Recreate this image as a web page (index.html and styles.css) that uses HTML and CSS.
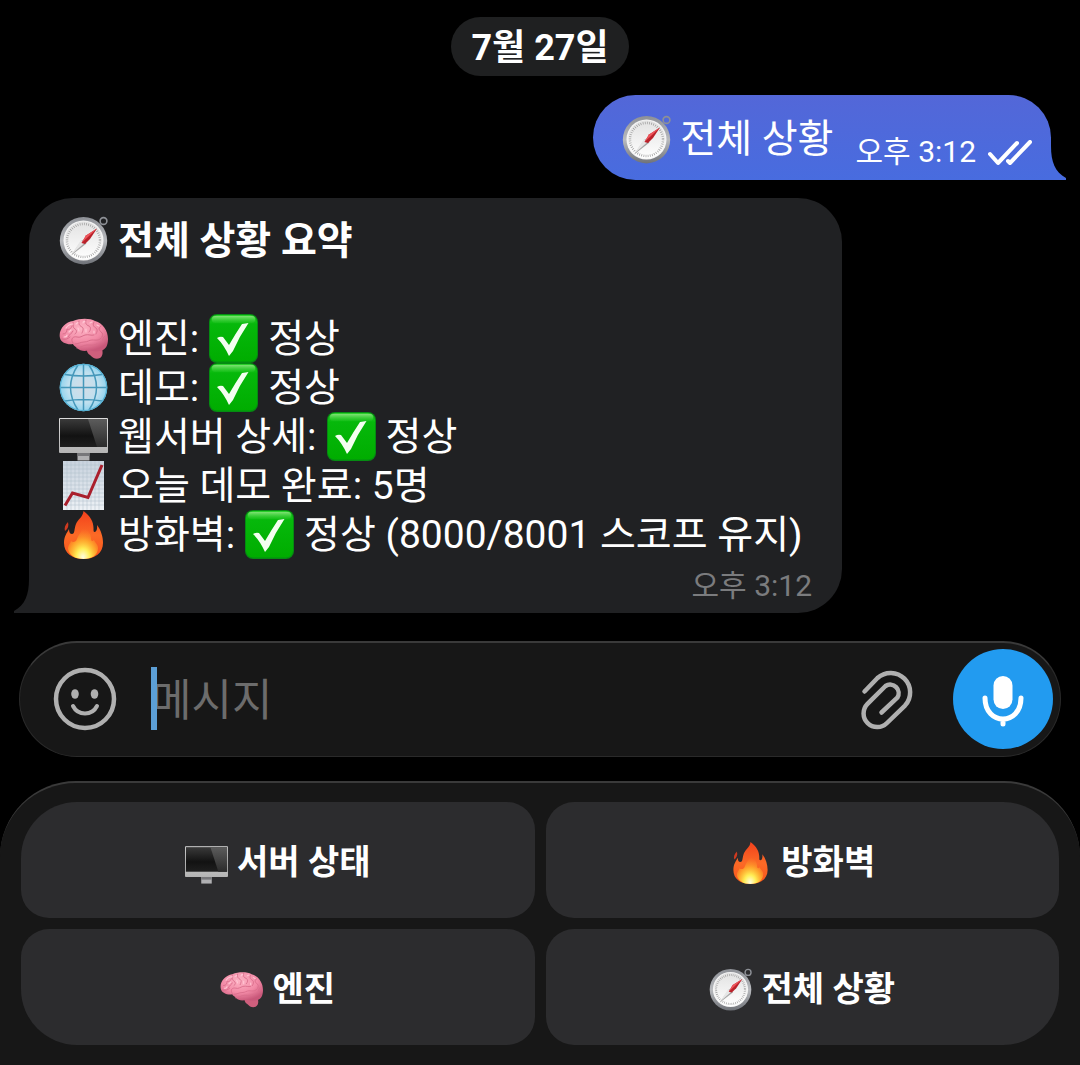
FILE: index.html
```html
<!DOCTYPE html>
<html lang="ko">
<head>
    <meta charset="UTF-8">
    <meta name="viewport" content="width=device-width, initial-scale=1.0">
    <title>전체 상황</title>
    <link rel="stylesheet" href="styles.css">
</head>
<body>
    <!-- Shared emoji drawings -->
    <svg class="sprite" aria-hidden="true">
        <defs>
            <linearGradient id="rim" x1="0" y1="0" x2="0" y2="1">
                <stop offset="0" stop-color="#8d9096"/>
                <stop offset=".5" stop-color="#b9bbbf"/>
                <stop offset="1" stop-color="#6f7278"/>
            </linearGradient>
            <linearGradient id="dial" x1="0" y1="0" x2="0" y2="1">
                <stop offset="0" stop-color="#e2e2e2"/>
                <stop offset="1" stop-color="#ffffff"/>
            </linearGradient>
            <radialGradient id="pink" cx=".45" cy=".3" r=".7">
                <stop offset="0" stop-color="#fdb3c4"/>
                <stop offset=".6" stop-color="#f28aa6"/>
                <stop offset="1" stop-color="#c9587a"/>
            </radialGradient>
            <radialGradient id="sea" cx=".5" cy=".5" r=".5">
                <stop offset="0" stop-color="#d5dde6"/>
                <stop offset=".65" stop-color="#bfe0ef"/>
                <stop offset="1" stop-color="#8fd3ee"/>
            </radialGradient>
            <linearGradient id="green" x1="0" y1="0" x2="0" y2="1">
                <stop offset="0" stop-color="#2bd02b"/>
                <stop offset=".2" stop-color="#06b80b"/>
                <stop offset="1" stop-color="#00ad00"/>
            </linearGradient>
            <linearGradient id="gloss" x1="0" y1="0" x2="0" y2="1">
                <stop offset="0" stop-color="#7fe274"/>
                <stop offset="1" stop-color="#2bc92b" stop-opacity=".3"/>
            </linearGradient>
            <linearGradient id="screen" x1="0" y1="0" x2="0" y2="1">
                <stop offset="0" stop-color="#3a3a3a"/>
                <stop offset=".6" stop-color="#121212"/>
                <stop offset="1" stop-color="#1f1f1f"/>
            </linearGradient>
            <linearGradient id="glare" x1="0" y1="0" x2="0" y2="1">
                <stop offset="0" stop-color="#5c5c5c"/>
                <stop offset="1" stop-color="#2b2b2b"/>
            </linearGradient>
            <linearGradient id="metal" x1="0" y1="0" x2="0" y2="1">
                <stop offset="0" stop-color="#dcdcdc"/>
                <stop offset="1" stop-color="#b4b4b4"/>
            </linearGradient>
            <linearGradient id="paper" x1="0" y1="0" x2="0" y2="1">
                <stop offset="0" stop-color="#c9d3de"/>
                <stop offset="1" stop-color="#edf1f5"/>
            </linearGradient>
            <linearGradient id="flame" x1="0" y1="0" x2="0" y2="1">
                <stop offset="0" stop-color="#f2401c"/>
                <stop offset=".5" stop-color="#fb6a26"/>
                <stop offset="1" stop-color="#f9551c"/>
            </linearGradient>
            <radialGradient id="core" cx=".5" cy=".95" r=".75">
                <stop offset="0" stop-color="#fffde0"/>
                <stop offset=".3" stop-color="#ffee55"/>
                <stop offset=".6" stop-color="#ffb52e" stop-opacity=".8"/>
                <stop offset="1" stop-color="#fd7f27" stop-opacity="0"/>
            </radialGradient>
        </defs>
        <symbol id="compass" viewBox="0 0 49 49">
            <circle cx="44.5" cy="5" r="3.4" fill="none" stroke="#8d9096" stroke-width="1.6"/>
            <circle cx="24.5" cy="24.7" r="23.7" fill="url(#rim)"/>
            <circle cx="24.5" cy="24.5" r="20" fill="#f6f6f6"/>
            <circle cx="24.5" cy="24.5" r="19" fill="url(#dial)"/>
            <circle cx="24.5" cy="24.5" r="16.5" fill="none" stroke="#9a9a9a" stroke-width="2.4" stroke-dasharray=".7 1.46"/>
            <path d="M12 39.5L23 24l4.5 3.5z" fill="#a4a4a4"/>
            <path d="M12.5 38.5L22 24l3.5 3z" fill="#e6e6e6"/>
            <path d="M38 12.5L27 19.5 22.5 27 26 28 31 23z" fill="#b9212a"/>
            <path d="M38 12.5L27 19.5 22.5 27z" fill="#ef555b"/>
        </symbol>
        <symbol id="brain" viewBox="0 0 49 49">
            <path d="M31 33c-5 2-3 6 0 8 3 3 6 5 10 3 3-2 3-6 2-9z" fill="#cf5f7d"/>
            <path d="M1 24C-1 16 6 8 14 7c7-3 17-3 22 0 8 2 13 10 13 18 0 6-2 11-8 12-5 1-8 0-11-1-4 2-9 1-12-2-2-2-4-3-4-4-5 1-12-1-13-6z" fill="url(#pink)"/>
            <path d="M14 29c-3-4 0-7 4-6 3 1 5-1 8-2 4-1 6 1 9 0M16 30c3 0 6-2 9-2 4 0 5-2 8-2 4 0 7 1 9-2M18 34c4 0 6-3 10-3 4 0 7 1 10-1M4 20c3 0 4-2 4-5 2 1 4 0 5-3M9 23c1-3 4-3 5-6M14 8c1 3-1 5 2 7 2 1 2 4 0 5M20 7c-1 3 1 5 3 6s1 4 0 6M27 6c-1 3 0 5 3 6 2 1 2 4 0 6M35 8c-2 3 0 5 2 6 2 2 1 4 0 6M42 12c-3 2-2 4 0 6 2 1 2 3 1 5M46 22c-2 1-3 4-2 6M3 25c3 1 6 0 8-2" fill="none" stroke="#d96e8b" stroke-width="1" stroke-linecap="round"/>
            <path d="M7 14c2-3 5-4 7-4M17 10c1-1 2-2 2-1M24 9c0-2 2-2 2-1M31 9l2-1M38 11l2 1M10 18l2-2M27 15v3M19 14l1 3M35 17v2M5 23c2 0 3-1 3-2" fill="none" stroke="#ffc6d4" stroke-width="1.2" stroke-linecap="round"/>
        </symbol>
        <symbol id="globe" viewBox="0 0 49 49">
            <circle cx="24.5" cy="24.5" r="23.8" fill="url(#sea)"/>
            <g fill="none" stroke="#4698ba" stroke-width="1.5">
                <path d="M24.5 1v47M1 24.5h47M6 11.5q18.5 3 37 0M6 38q18.5-3 37 0"/>
                <path d="M19 2Q4 24.5 19 47M30 2q15 22.5 0 45"/>
                <circle cx="24.5" cy="24.5" r="23.2" stroke="#55b0d3" stroke-width="1.2"/>
            </g>
        </symbol>
        <symbol id="monitor" viewBox="0 0 49 49">
            <path d="M18.5 40h12v8.5h-12z" fill="#b0b0b2"/>
            <path d="M18.5 41h12v3h-12z" fill="#77777a"/>
            <rect x="0" y="6" width="49" height="35" rx="1" fill="url(#metal)"/>
            <rect x="1" y="7" width="47" height="28" fill="url(#screen)"/>
            <path d="M29 7h19v28H38z" fill="url(#glare)"/>
        </symbol>
        <symbol id="chart" viewBox="0 0 49 49">
            <rect x="4" y="0" width="41" height="49" fill="url(#paper)"/>
            <path d="M8 0v49M12 0v49M16 0v49M20 0v49M24 0v49M28 0v49M32 0v49M36 0v49M40 0v49M4 4h41M4 8h41M4 12h41M4 16h41M4 20h41M4 24h41M4 28h41M4 32h41M4 36h41M4 40h41M4 44h41" stroke="#aebccb" stroke-width=".5"/>
            <path d="M6 44.5L13.5 32 29 36.5 43 4" fill="none" stroke="#aa1f2c" stroke-width="3"/>
        </symbol>
        <symbol id="fire" viewBox="0 0 49 49">
            <path d="M24.5 1c7 5 10 11 10 17 0 3 0 4 1 4 2 0 3-3 2.5-7 4 5 6 12 6 18 0 10-8 16-19.5 16S5 43 5 33c0-7 3-10 5-14 0 3 1 5 3 5 3 0 2-5 4-10 2-5 7-7 7.5-13z" fill="url(#flame)"/>
            <path d="M9 12c-3 3-4 6-3 9 3-2 4-5 3-9z" fill="#cf3a20"/>
            <path d="M25 11c1 8 7 11 7 17 0 3 1 4 3 2 1 3 4 4 4 8 0 7-6 11-14.5 11S10 45 9 39c0-4 2-5 3-8 2 2 5 1 6-2 2-6 7-9 7-18z" fill="url(#core)"/>
        </symbol>
        <symbol id="check" viewBox="0 0 49 49">
            <rect x="0" y="0" width="49" height="49" rx="8" fill="#058c12"/>
            <rect x="1" y="1" width="47" height="46.5" rx="7" fill="url(#green)"/>
            <rect x="3" y="2" width="43" height="7" rx="3" fill="url(#gloss)"/>
            <path d="M8 24q3-2 6-1l6 8Q27 19 33 10l6.5-1Q30 23 24 37l-4 5Q15 31 8 24z" fill="#f3fff0"/>
        </symbol>
    </svg>

    <main class="chat">
        <time class="date-pill" datetime="07-27">7월 27일</time>

        <article class="bubble bubble-out">
            <p class="line">
                <svg class="emoji" role="img" aria-label="나침반"><use href="#compass"/></svg>
                <span>전체 상황</span>
            </p>
            <div class="meta">
                <time>오후 3:12</time>
                <svg class="ticks" viewBox="0 0 44 26" role="img" aria-label="읽음">
                    <path d="M2 14l8 9L29 3M20 21l2 2L42 2" fill="none" stroke="currentColor" stroke-width="4" stroke-linecap="round" stroke-linejoin="round"/>
                </svg>
            </div>
            <svg class="tail" viewBox="0 0 16 34"><path d="M0 0h1c0 16 4 26 15 32v2H0z" fill="currentColor"/></svg>
        </article>

        <article class="bubble bubble-in">
            <p class="line line-title">
                <svg class="emoji" role="img" aria-label="나침반"><use href="#compass"/></svg>
                <strong>전체 상황 요약</strong>
            </p>
            <p class="line">
                <svg class="emoji" role="img" aria-label="뇌"><use href="#brain"/></svg>
                <span>엔진:</span>
                <svg class="emoji" role="img" aria-label="확인"><use href="#check"/></svg>
                <span>정상</span>
            </p>
            <p class="line">
                <svg class="emoji" role="img" aria-label="지구"><use href="#globe"/></svg>
                <span>데모:</span>
                <svg class="emoji" role="img" aria-label="확인"><use href="#check"/></svg>
                <span>정상</span>
            </p>
            <p class="line">
                <svg class="emoji" role="img" aria-label="모니터"><use href="#monitor"/></svg>
                <span>웹서버 상세:</span>
                <svg class="emoji" role="img" aria-label="확인"><use href="#check"/></svg>
                <span>정상</span>
            </p>
            <p class="line">
                <svg class="emoji" role="img" aria-label="차트"><use href="#chart"/></svg>
                <span>오늘 데모 완료: 5명</span>
            </p>
            <p class="line">
                <svg class="emoji" role="img" aria-label="불"><use href="#fire"/></svg>
                <span>방화벽:</span>
                <svg class="emoji" role="img" aria-label="확인"><use href="#check"/></svg>
                <span>정상 (8000/8001 스코프 유지)</span>
            </p>
            <div class="meta">
                <time>오후 3:12</time>
            </div>
            <svg class="tail" viewBox="0 0 16 34"><path d="M16 0h-1c0 16-4 26-15 32v2h16z" fill="currentColor"/></svg>
        </article>
    </main>

    <form class="composer">
        <button type="button" class="icon-btn" aria-label="이모티콘">
            <svg class="icon" viewBox="0 0 64 64">
                <circle cx="32" cy="32" r="29" fill="none" stroke="currentColor" stroke-width="4.5"/>
                <ellipse cx="22" cy="27" rx="3.8" ry="4.8" fill="currentColor"/>
                <ellipse cx="41.5" cy="27" rx="3.8" ry="4.8" fill="currentColor"/>
                <path d="M20 39c5 10 19 10 24 0" fill="none" stroke="currentColor" stroke-width="4" stroke-linecap="round"/>
            </svg>
        </button>
        <div class="field">
            <input type="text" class="message-input" aria-label="메시지" placeholder="메시지">
            <span class="caret"></span>
        </div>
        <button type="button" class="icon-btn" aria-label="파일 첨부">
            <svg class="icon" viewBox="0 0 64 64">
                <path d="M9.500 24.500L22.500 11A19.500 19.500 0 0 1 50 38.600L32 56A13.500 13.500 0 0 1 12.500 36.800L30.500 19A8.500 8.500 0 0 1 42.300 30.700L26.500 45.500" fill="none" stroke="currentColor" stroke-width="4.5" stroke-linecap="round" stroke-linejoin="round"/>
            </svg>
        </button>
        <button type="button" class="mic-btn" aria-label="음성 메시지">
            <svg class="icon" viewBox="0 0 64 64">
                <rect x="22.5" y="9" width="19" height="33" rx="9.5" fill="currentColor"/>
                <path d="M14 31c0 28 36 28 36 0M32 52v5" fill="none" stroke="currentColor" stroke-width="5" stroke-linecap="round"/>
            </svg>
        </button>
    </form>

    <nav class="keyboard">
        <button type="button" class="key"><svg class="emoji" aria-hidden="true"><use href="#monitor"/></svg><span>서버 상태</span></button>
        <button type="button" class="key"><svg class="emoji" aria-hidden="true"><use href="#fire"/></svg><span>방화벽</span></button>
        <button type="button" class="key"><svg class="emoji" aria-hidden="true"><use href="#brain"/></svg><span>엔진</span></button>
        <button type="button" class="key"><svg class="emoji" aria-hidden="true"><use href="#compass"/></svg><span>전체 상황</span></button>
    </nav>
</body>
</html>
```
FILE: styles.css
```css
* {
    box-sizing: border-box;
}
body {
    display: flex;
    flex-direction: column;
    min-height: 100vh;
    margin: 0;
    background-color: #000;
    color: #fff;
    font-family: Roboto, "Noto Sans CJK KR", sans-serif;
    font-size: 39px;
}
button, input {
    padding: 0;
    border: none;
    background: none;
    color: inherit;
    font-family: inherit;
}
button {
    cursor: pointer;
}
p {
    margin: 0;
}
.sprite {
    position: absolute;
    width: 0;
    height: 0;
}

/* Messages */
.chat {
    flex: 1;
    display: flex;
    flex-direction: column;
    align-items: flex-start;
    padding: 17px 29px 28px;
}
.date-pill {
    align-self: center;
    padding: 4px 20px 0;
    border-radius: 30px;
    background-color: #1f2021;
    font-size: 36px;
    font-weight: 700;
    line-height: 55px;
}
.bubble {
    position: relative;
    border-radius: 44px;
}
.line {
    display: flex;
    align-items: center;
    gap: 9px;
    line-height: 49px;
}
.line-title {
    margin-bottom: 49px;
}
.emoji {
    flex: none;
    width: 49px;
    height: 49px;
}
.meta {
    display: flex;
    align-items: center;
    gap: 12px;
    font-size: 30px;
    line-height: 40px;
}
.tail {
    position: absolute;
    bottom: 0;
    width: 16px;
    height: 34px;
}
.bubble-out {
    align-self: flex-end;
    display: flex;
    align-items: center;
    gap: 22px;
    margin-top: 19px;
    padding: 8px 19px 8px 29px;
    border-bottom-right-radius: 0;
    background: linear-gradient(#5367d8, #486cdf);
}
.bubble-out .line {
    padding-top: 4px;
}
.bubble-out .meta {
    padding-top: 29px;
}
.bubble-out .tail {
    left: 100%;
    margin-left: -1px;
    color: #486cdf;
}
.ticks {
    width: 44px;
    height: 26px;
    margin-top: 2px;
}
.bubble-in {
    min-width: min(813px, 100%);
    margin-top: 18px;
    padding: 18px 30px 6px;
    border-bottom-left-radius: 0;
    background-color: #202123;
}
.bubble-in .line {
    gap: 10px;
}
.bubble-in .line span, .bubble-in .line strong {
    margin-top: 2px;
}
.bubble-in .line {
    height: 49px;
}
.bubble-in .meta {
    justify-content: flex-end;
    padding-top: 7px;
    padding-bottom: 1px;
    color: #7b7c7e;
}
.bubble-in .tail {
    right: 100%;
    margin-right: -1px;
    color: #202123;
}

/* Message box */
.composer {
    display: flex;
    align-items: center;
    margin: 0 19px;
    padding: 6px 7px 7px 33px;
    border: 1px solid #2a2a2a;
    border-top: 2px solid #3a3a3a;
    border-radius: 58px;
    background-color: #171717;
}
.icon {
    display: block;
    width: 64px;
    height: 64px;
}
.icon-btn {
    color: #b0b0b0;
}
.field {
    position: relative;
    flex: 1;
    min-width: 0;
    margin-left: 34px;
}
.message-input {
    width: 100%;
    height: 64px;
    padding-top: 4px;
    outline: none;
    font-size: 44px;
}
.message-input::placeholder {
    color: #6c6c6c;
    opacity: 1;
}
.caret {
    position: absolute;
    top: 0;
    left: 0;
    width: 6px;
    height: 63px;
    background-color: #5c9fd6;
}
.mic-btn {
    display: flex;
    align-items: center;
    justify-content: center;
    width: 100px;
    height: 100px;
    margin-left: 34px;
    border-radius: 50%;
    background-color: #229bf0;
}

/* Reply keyboard */
.keyboard {
    display: grid;
    grid-template-columns: 1fr 1fr;
    gap: 11px;
    margin-top: 24px;
    padding: 19px 21px 20px;
    border-top: 2px solid #3a3a3a;
    border-radius: 76px 76px 0 0;
    background-color: #171717;
}
.key {
    display: flex;
    align-items: center;
    justify-content: center;
    gap: 9px;
    height: 116px;
    border-radius: 28px;
    background-color: #2c2c2e;
    font-size: 34px;
    font-weight: 700;
}
.key:nth-child(1) {
    border-top-left-radius: 56px;
}
.key:nth-child(2) {
    border-top-right-radius: 56px;
}
.key:nth-child(3) {
    border-bottom-left-radius: 56px;
}
.key:nth-child(4) {
    border-bottom-right-radius: 56px;
}
.key .emoji {
    width: 43px;
    height: 43px;
    margin-top: 4px;
}
.key span {
    margin-top: -2px;
}
```
